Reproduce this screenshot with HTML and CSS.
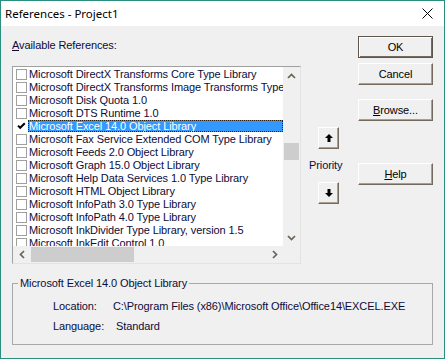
FILE: index.html
```html
<!DOCTYPE html>
<html>
<head>
<meta charset="utf-8">
<title>References - Project1</title>
<link rel="stylesheet" href="styles.css">
</head>
<body>
<div class="window">
  <div class="titlebar">
    <span class="title">References - Project1</span>
    <svg class="close" viewBox="0 0 11 11" width="11" height="11"><path d="M0.5 0.5 L10.5 10.5 M10.5 0.5 L0.5 10.5" stroke="#000" stroke-width="1" fill="none"/></svg>
  </div>
  <div class="dialog">
    <div class="top">
      <div class="left">
        <div class="label"><u>A</u>vailable References:</div>
        <div class="listbox">
          <div class="items">
            <div class="row"><span class="cb"></span><span class="txt">Microsoft DirectX Transforms Core Type Library</span></div>
            <div class="row"><span class="cb"></span><span class="txt">Microsoft DirectX Transforms Image Transforms Type Library</span></div>
            <div class="row"><span class="cb"></span><span class="txt">Microsoft Disk Quota 1.0</span></div>
            <div class="row"><span class="cb"></span><span class="txt">Microsoft DTS Runtime 1.0</span></div>
            <div class="row sel"><span class="cb checked"><svg viewBox="0 0 11 11" width="11" height="11"><path d="M2 4.6 L4.2 6.8 L8.8 2.2" stroke="#000" stroke-width="2" fill="none"/></svg></span><span class="txt">Microsoft Excel 14.0 Object Library</span></div>
            <div class="row"><span class="cb"></span><span class="txt">Microsoft Fax Service Extended COM Type Library</span></div>
            <div class="row"><span class="cb"></span><span class="txt">Microsoft Feeds 2.0 Object Library</span></div>
            <div class="row"><span class="cb"></span><span class="txt">Microsoft Graph 15.0 Object Library</span></div>
            <div class="row"><span class="cb"></span><span class="txt">Microsoft Help Data Services 1.0 Type Library</span></div>
            <div class="row"><span class="cb"></span><span class="txt">Microsoft HTML Object Library</span></div>
            <div class="row"><span class="cb"></span><span class="txt">Microsoft InfoPath 3.0 Type Library</span></div>
            <div class="row"><span class="cb"></span><span class="txt">Microsoft InfoPath 4.0 Type Library</span></div>
            <div class="row"><span class="cb"></span><span class="txt">Microsoft InkDivider Type Library, version 1.5</span></div>
            <div class="row"><span class="cb"></span><span class="txt">Microsoft InkEdit Control 1.0</span></div>
          </div>
          <div class="vscroll">
            <div class="arr"><svg viewBox="0 0 9 6" width="9" height="6"><path d="M1 5 L4.5 1.5 L8 5" stroke="#6a6158" stroke-width="1.7" fill="none"/></svg></div>
            <div class="track"><div class="vthumb" style="margin-top:59px"></div></div>
            <div class="arr"><svg viewBox="0 0 9 6" width="9" height="6"><path d="M1 1 L4.5 4.5 L8 1" stroke="#6a6158" stroke-width="1.7" fill="none"/></svg></div>
          </div>
          <div class="hscroll">
            <div class="harr"><svg viewBox="0 0 6 9" width="6" height="9"><path d="M5 1 L1.5 4.5 L5 8" stroke="#6a6158" stroke-width="1.7" fill="none"/></svg></div>
            <div class="htrack"><div class="hthumb" style="width:103px"></div></div>
            <div class="harr"><svg viewBox="0 0 6 9" width="6" height="9"><path d="M1 1 L4.5 4.5 L1 8" stroke="#6a6158" stroke-width="1.7" fill="none"/></svg></div>
          </div>
          <div class="corner"></div>
        </div>
      </div>
      <div class="priority">
        <button class="btn pbtn"><svg viewBox="0 0 8 8" width="8" height="8"><path d="M4 0 L8 4 H5.5 V8 H2.5 V4 H0 Z" fill="#000"/></svg></button>
        <div class="plabel">Priority</div>
        <button class="btn pbtn"><svg viewBox="0 0 8 8" width="8" height="8"><path d="M4 8 L8 4 H5.5 V0 H2.5 V4 H0 Z" fill="#000"/></svg></button>
      </div>
      <div class="buttons">
        <button class="btn default">OK</button>
        <button class="btn cancel">Cancel</button>
        <button class="btn browse"><span><u>B</u>rowse...</span></button>
        <button class="btn help"><span><u>H</u>elp</span></button>
      </div>
    </div>
    <fieldset class="group">
      <legend>Microsoft Excel 14.0 Object Library</legend>
      <div class="info">
        <span>Location:</span><span>C:\Program Files (x86)\Microsoft Office\Office14\EXCEL.EXE</span>
        <span>Language:</span><span class="std">Standard</span>
      </div>
    </fieldset>
  </div>
</div>
</body>
</html>
```

FILE: styles.css
```css
* { box-sizing: border-box; }
html, body { margin: 0; padding: 0; }
body {
  width: 445px;
  height: 359px;
  overflow: hidden;
  font-family: "Liberation Sans", Arial, sans-serif;
  font-size: 11px;
}
.window {
  width: 445px;
  height: 359px;
  border: 1px solid #2a8f7f;
  background: #f0f0f0;
  display: flex;
  flex-direction: column;
}
.titlebar {
  height: 25px;
  flex: none;
  background: #fff;
  display: flex;
  align-items: center;
  justify-content: space-between;
  padding: 0 11px 0 4px;
}
.title {
  font-family: "Noto Sans", sans-serif;
  font-size: 11.5px;
  color: #000;
}
.close { display: block; }
.dialog {
  flex: 1;
  padding: 10px 11px 0 11px;
  color: #0c0c3a;
  letter-spacing: -0.1px;
}
.top {
  display: flex;
  align-items: flex-start;
  height: 228px;
}
.left { width: 289px; flex: none; }
.label {
  margin-top: 3px;
  height: 13px;
  line-height: 13px;
}
.listbox {
  margin-top: 14px;
  height: 198px;
  border: 1px solid;
  border-color: #a0a0a0 #e3e3e3 #e3e3e3 #a0a0a0;
  background: #fff;
  display: grid;
  grid-template-columns: 1fr 17px;
  grid-template-rows: 1fr 17px;
}
.items {
  overflow: hidden;
  padding-top: 1px;
  min-width: 0;
}
.row {
  display: flex;
  align-items: center;
  height: 13px;
  white-space: nowrap;
}
.cb {
  flex: none;
  width: 11px;
  height: 11px;
  margin-left: 3px;
  margin-right: 1px;
  border: 1px solid #a0a0a0;
  background: #fff;
}
.cb.checked {
  border-color: transparent;
  position: relative;
}
.cb.checked svg { display: block; margin: -1px; }
.txt {
  flex: 1;
  align-self: flex-start;
  height: 12px;
  line-height: 12px;
  padding-left: 1px;
  overflow: hidden;
}
.row.sel .txt {
  background: #3399ff;
  color: #fff;
  outline: 1px dotted #2a1e10;
  outline-offset: -1px;
}
.vscroll {
  background: #f0f0f0;
  display: flex;
  flex-direction: column;
}
.arr {
  flex: none;
  height: 17px;
  display: flex;
  align-items: center;
  justify-content: center;
}
.track { flex: 1; }
.vthumb {
  height: 17px;
  margin-left: 1px;
  margin-right: 1px;
  background: #cdcdcd;
}
.hscroll {
  background: #f0f0f0;
  display: flex;
}
.harr {
  flex: none;
  width: 17px;
  display: flex;
  align-items: center;
  justify-content: center;
}
.htrack { flex: 1; }
.hthumb {
  height: 15px;
  margin-top: 1px;
  margin-left: 1px;
  background: #cdcdcd;
}
.corner { background: #f0f0f0; }
.priority {
  flex: 1;
  display: flex;
  flex-direction: column;
  align-items: center;
  padding-top: 91px;
  padding-right: 2px;
}
.plabel {
  align-self: flex-start;
  margin: 10px 0 10px 8px;
  height: 13px;
  line-height: 13px;
}
.buttons {
  width: 75px;
  flex: none;
  display: flex;
  flex-direction: column;
}
.btn {
  font: inherit;
  letter-spacing: inherit;
  color: #000;
  background: #f0f0f0;
  height: 22px;
  width: 75px;
  padding: 0;
  margin: 0;
  border: 1px solid;
  border-color: #fff #746a5e #746a5e #fff;
  box-shadow: inset -1px -1px 0 #a89e92;
  display: flex;
  align-items: center;
  justify-content: center;
}
.btn.default {
  border-color: #5e554b;
  box-shadow: inset 1px 1px 0 #fff, inset -1px -1px 0 #746a5e;
}
.pbtn { width: 21px; height: 22px; }
.pbtn svg { display: block; }
.cancel { margin-top: 5px; }
.browse { margin-top: 14px; }
.help { margin-top: 42px; }
.group {
  margin: 13px 0 0 0;
  padding: 0 0 11px 0;
  border: 1px solid #a8a8a8;
  min-width: 0;
}
.group legend {
  margin-left: 5px;
  padding: 0 2px;
  line-height: 13px;
}
.info {
  display: grid;
  grid-template-columns: 60px auto;
  row-gap: 7px;
  margin: 10px 0 0 40px;
  line-height: 13px;
  white-space: nowrap;
}
.std { margin-left: 3px; }
```
